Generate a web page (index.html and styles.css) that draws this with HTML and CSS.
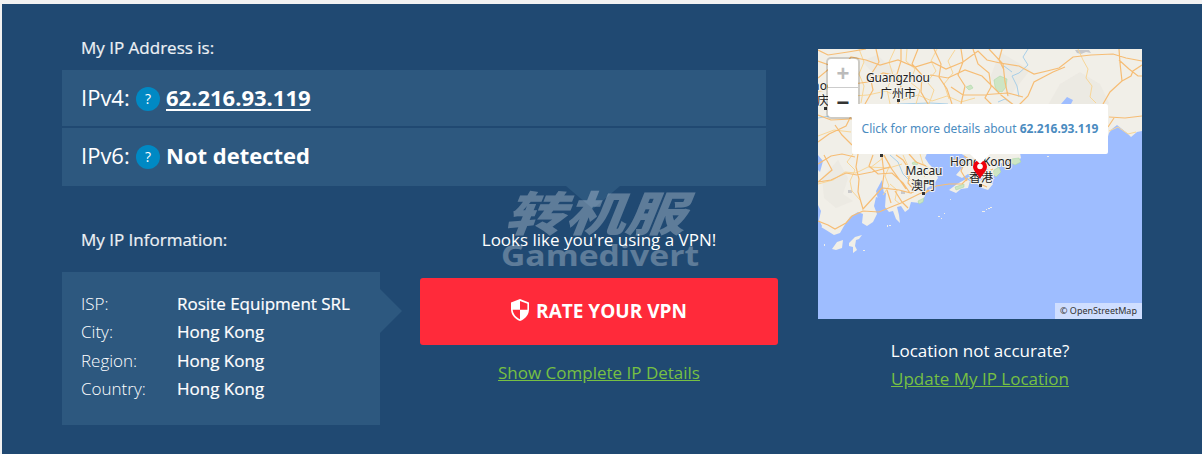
FILE: index.html
```html
<!DOCTYPE html>
<html lang="en">
<head>
  <meta charset="UTF-8" />
  <title>What Is My IP Address</title>
  <link rel="stylesheet" href="styles.css">
</head>
<body>

<div class="hero">
  <div class="left">
    <h2 class="title">My IP Address is:</h2>
    <div class="ip-list">
      <p class="ip-row"><span class="ip-label">IPv4:</span><span class="help">?</span><a class="ip-value" href="#">62.216.93.119</a></p>
      <p class="ip-row"><span class="ip-label">IPv6:</span><span class="help">?</span><span class="ip-value">Not detected</span></p>
    </div>

    <div class="details">
      <div class="info">
        <h2 class="title">My IP Information:</h2>
        <div class="info-box">
          <p><span>ISP:</span><b>Rosite Equipment SRL</b></p>
          <p><span>City:</span><b>Hong Kong</b></p>
          <p><span>Region:</span><b>Hong Kong</b></p>
          <p><span>Country:</span><b>Hong Kong</b></p>
        </div>
      </div>

      <div class="vpn">
        <div class="watermark">
          <svg width="204" height="84" viewBox="0 0 204 84">
            <text class="wm-cn" transform="translate(3 42) skewX(-22)" textLength="180" lengthAdjust="spacingAndGlyphs">转机服</text>
            <text class="wm-en" x="0" y="77" textLength="198" lengthAdjust="spacingAndGlyphs">Gamedivert</text>
          </svg>
        </div>
        <p class="vpn-text">Looks like you're using a VPN!</p>
        <a class="rate" href="#">
          <svg width="18" height="22" viewBox="0 0 18 22">
            <path d="M9 0L18 3.5V10C18 15.500 14.500 20 9 22C3.500 20 0 15.500 0 10V3.500Z" fill="#fff"/>
            <path d="M9 2L16.400 4.700V10.800H9ZM9 10.800V20.200C5 18.500 2 15 1.700 10.800Z" fill="#ff2a3a"/>
          </svg>
          <span>RATE YOUR VPN</span>
        </a>
        <a class="green-link" href="#">Show Complete IP Details</a>
      </div>
    </div>
  </div>

  <div class="right">
    <div class="map">
      <svg class="tiles" width="324" height="270" viewBox="818 49 324 270">
        <rect x="818" y="49" width="324" height="270" fill="#9ebdff"/>

        <!-- mainland -->
        <path fill="#f1efe8" d="M818 49H1142V131L1137 132L1131 137L1127 133L1122 129L1117 125L1112 129L1109 133L1107 140L1100 150L1020 153L1021 158L1016 162L1008 160L1003 164L999 162L997 166L999 171L992 174L987 169L981 173L975 174L968 174L962 178L956 175L962 168L968 162L965 156L955 150L928 151L925 158L929 164L935 170L938 178L934 184L927 188L925 196L920 203L911 202L909 209L905 212L901 206L897 207L899 215L900 223L896 219L893 211L889 212L885 207L886 193L883 192L879 198L876 197L874 206L877 214L873 222L867 226L862 223L863 214L858 212L850 217L844 226L840 233L834 235L826 230L821 227L818 221Z"/>
        <path fill="#e9e6df" d="M822 178L838 160L848 178L843 194L853 201L836 208L824 198ZM1044 112L1060 84L1080 72L1100 84L1109 103L1090 132ZM1000 52L1030 70L1009 97L990 78ZM877 55L895 71L881 82L862 61Z" opacity=".6"/>
        <path fill="#9ebdff" d="M818 205L821 211L819 220L822 226L820 231L818 232ZM818 155L823 161L820 172L818 170ZM1061 104L1067 97L1073 100L1071 104ZM876 191L882 180L884 194L878 199Z"/>

        <!-- islands -->
        <path fill="#f1efe8" d="M949 190L957 184L966 179L970 181L968 188L961 189L956 193ZM975 182L986 179L993 184L988 190L982 188ZM832 249L837 242L843 240L842 248L836 250ZM849 243L855 237L862 235L859 239L856 240L855 246L857 250L853 253L853 247L849 246ZM824 244h1v2h-1zM863 250h2v1h-2zM887 225h1v2h-1zM889 225h2v1h-2zM938 216h2v1h-2zM941 218h1v1h-1zM944 213h1v1h-1zM950 199h1v1h-1zM982 211h3v1h-3zM986 209h1v1h-1zM988 208h2v-1h2v1h-2v1h-2zM1047 156h2v1h-2z"/>
        <path class="park" d="M994 80L1000 76L1007 79L1006 87L1002 92L997 91L995 87ZM966 87l5-2 2 3-4 2zM1011 159l8-1 2 4-6 3-4-2zM994 170l5-3 2 5-5 5-3-3zM955 187l9-3v3l-8 3zM918 201l6-3-1 4-4 2zM912 163l4-2 2 3-4 2z"/>
        <path fill="#c9c9cb" d="M1075 50h14l2 3-5-1-5 2-4-1zM848 190h4v3h-4zM901 191h4v3h-4z"/>

        <!-- rivers -->
        <path class="river" d="M818 118L829 116L842 110L857 107L880 110L900 104L930 103L948 104M1028 49L1023 57L1028 65L1019 73L1012 76L1017 86L1019 97M890 155L898 162L903 174L910 181M998 102L1005 99L1011 103M924 98L933 111M1004 66L1012 72"/>

        <!-- minor roads -->
        <path class="minor" d="M818 92L835 87L852 96L868 95L886 91L903 100L918 95L932 101L947 96L961 102L975 98M859 49L864 62L859 74L864 86L861 103M895 49L889 62L893 75L887 89L890 104M907 49L906 61L915 69L910 82L920 90L916 104M937 49L931 61L936 71L927 82L934 90L929 104M955 50L948 61L953 73L944 84L949 99M818 136L834 130L851 132M853 154L847 162L855 170L850 181L852 191L861 201M883 155L890 165L885 176L889 186L883 195M818 184L833 180L845 172L856 173L868 167L889 168L902 164M903 155L908 166L905 174L915 184L913 193M920 154L923 164L930 169L924 177M1078 49L1083 60L1088 69L1086 78L1092 86L1090 97L1096 103M1109 131L1118 127L1128 134L1136 132M870 168L883 158M954 163L967 166L974 159L989 163L1000 160L1009 162M900 204L895 200L897 190L890 184"/>

        <!-- highways -->
        <path class="road" d="M818 78L830 68L842 68L851 57L866 60L880 65L898 60L915 67L932 62L946 69L963 62L978 51L987 60L1000 63L1019 66L1034 74L1047 71L1059 68L1073 57L1091 55L1113 54L1126 58L1142 61M818 61L829 65L838 77L853 84L868 82L883 73L899 76L916 77L931 75L948 78L965 70L982 76L1001 95L1015 106M876 49L879 62L870 76L873 90L865 104M901 49L901 61L897 74L901 87L898 104M918 49L912 64L922 75L921 92L928 104M934 49L941 64L939 77L947 89L952 104M961 49L963 62L958 75L965 86L961 104M973 49L978 64L989 73L991 87L985 98L993 106M989 49L1003 64L1005 82L1008 96M1002 49L999 60L1004 70M1019 105L1028 96L1034 82L1053 72L1065 67M1119 49L1120 63L1122 81L1110 92L1103 104M1119 60L1129 69L1138 76L1142 76M1122 81L1131 76L1133 71L1142 65M1109 117L1125 118L1142 116M1108 127L1114 118M818 182L831 180L846 173L857 175L872 172L890 167M818 221L828 225L835 229L846 223L852 216L863 211L879 212L891 207L901 203L919 194L929 190M818 142L829 134L846 126L851 116M818 164L831 156L842 154L855 157M824 155L832 170L818 182M858 154L856 167L859 179L858 192L863 209L873 198L882 188L899 190L911 193L921 187M882 157L884 174L882 188M873 155L869 166L878 174L892 173L903 183L910 193M884 155L891 168L899 179L906 189M896 155L903 160L910 171L908 183L914 190M909 154L916 162L926 166M887 190L891 203M895 191L902 202L908 208M924 194L936 186L949 184L962 184L968 178M951 158L964 164L961 171L967 181M964 156L978 165L985 173L993 169M980 184L987 187M818 115L831 120L852 119M852 145L842 135L835 125M818 50L828 55L848 52L866 49M951 87L963 95L980 95L1008 93L1023 97"/>

        <!-- places -->
        <g class="place">
          <text x="798" y="90" textLength="55">Zhaoqing</text>
          <text x="805" y="105">肇庆</text>
          <text x="898" y="82" text-anchor="middle" textLength="64">Guangzhou</text>
          <text x="898" y="98" text-anchor="middle">广州市</text>
          <text x="924" y="175" text-anchor="middle" textLength="37">Macau</text>
          <text x="923" y="190" text-anchor="middle">澳門</text>
          <text x="981" y="166" text-anchor="middle" textLength="62">Hong Kong</text>
          <text x="981" y="182" text-anchor="middle">香港</text>
        </g>
        <path fill="#333" d="M824 107h3v3h-3zM897 99h3v3h-3zM880 154h3v3h-3zM922 192h3v3h-3zM979 184h3v3h-3z"/>

        <!-- marker -->
        <path fill="#f0000b" d="M980 179C978 174 973 171.500 973 166.500A7 6.500 0 0 1 987 166.500C987 171.500 982 174 980 179Z"/>
        <circle cx="980" cy="166.500" r="2.800" fill="#fff"/>
      </svg>
      <div class="zoom-control"><span class="disabled">+</span><span>−</span></div>
      <div class="popup">Click for more details about <b>62.216.93.119</b></div>
      <div class="attribution">© OpenStreetMap</div>
    </div>
    <p class="location-text">Location not accurate?</p>
    <a class="green-link" href="#">Update My IP Location</a>
  </div>
</div>

</body>
</html>
```

FILE: styles.css
```css
body {
  margin: 0;
  padding: 4px 0 0 2px;
  background: #f2f2f2;
  font-family: "Open Sans", "Noto Sans CJK SC", sans-serif;
  font-size: 17px;
  color: #fff;
}

p, h2 {
  margin: 0;
}

.hero {
  display: flex;
  height: 450px;
  padding-left: 60px;
  box-sizing: border-box;
  background: #204972;
  overflow: hidden;
}

.left {
  width: 704px;
  flex-shrink: 0;
  padding-top: 32px;
}

.title {
  padding-left: 19px;
  font-size: 17px;
  font-weight: 400;
  line-height: 24px;
  color: #edf1f5;
  -webkit-text-stroke: 0.200px #edf1f5;
}

/* address rows */
.ip-list {
  position: relative;
  display: flex;
  flex-direction: column;
  gap: 2px;
  margin-top: 10px;
}

.ip-list::after {
  content: "";
  position: absolute;
  left: 504px;
  top: 116px;
  border: 27px solid transparent;
  border-top: 23px solid #2d587f;
  border-bottom: 0;
}

.ip-row {
  display: flex;
  align-items: flex-start;
  height: 56px;
  padding-left: 19px;
  background: #2d587f;
  font-size: 22px;
  line-height: 54px;
}

.ip-row + .ip-row {
  height: 58px;
}

.ip-label {
  width: 55px;
}

.help {
  width: 24px;
  margin: 17px 6px 0 0;
  border-radius: 50%;
  background: #0089c4;
  font-size: 14px;
  line-height: 24px;
  text-align: center;
}

.ip-value {
  color: #fff;
  font-weight: 700;
  text-underline-offset: 3px;
}

/* info + vpn */
.details {
  display: flex;
  gap: 40px;
  margin-top: 42px;
}

.info {
  width: 318px;
  flex-shrink: 0;
}

.info-box {
  position: relative;
  height: 153px;
  margin-top: 20px;
  padding: 18px 0 0 19px;
  box-sizing: border-box;
  background: #2d587f;
}

.info-box::after {
  content: "";
  position: absolute;
  left: 318px;
  top: 17px;
  border: 22px solid transparent;
  border-left-color: #2d587f;
  border-right: 0;
}

.info-box p {
  display: flex;
  line-height: 28.300px;
}

.info-box span {
  width: 96px;
  font-weight: 300;
}

.info-box b {
  font-weight: 400;
  -webkit-text-stroke: 0.200px #fff;
}

.vpn {
  position: relative;
  width: 358px;
  flex-shrink: 0;
  text-align: center;
}

.watermark {
  position: absolute;
  left: 81px;
  top: -39px;
  opacity: 0.280;
}

.watermark text {
  fill: #fff;
}

.wm-cn {
  font: 900 47px "Noto Sans CJK SC", sans-serif;
}

.wm-en {
  font: 700 28px "Open Sans", sans-serif;
}

.vpn-text {
  position: relative;
  line-height: 24px;
}

.rate {
  display: flex;
  align-items: center;
  justify-content: center;
  gap: 7px;
  height: 67px;
  margin: 26px 0 16px;
  border-radius: 3px;
  background: #ff2a3a;
  color: #fff;
  font-size: 19px;
  font-weight: 700;
  text-decoration: none;
}

.rate svg {
  margin-bottom: 3px;
}

.rate span {
  padding-bottom: 2px;
}

.green-link {
  color: #77c043;
  line-height: 24px;
}

/* map */
.right {
  width: 324px;
  margin-left: 52px;
  padding-top: 45px;
  text-align: center;
}

.map {
  position: relative;
  width: 324px;
  height: 270px;
  margin-bottom: 20px;
  overflow: hidden;
}

.tiles {
  display: block;
}

.road, .minor, .river {
  fill: none;
  stroke: #f6bd75;
  stroke-width: 1.200px;
}

.minor {
  stroke: #f8d697;
  stroke-width: 1px;
}

.river {
  stroke: #a8cfe8;
  stroke-width: 1px;
}

.park {
  fill: #cde5c4;
  stroke: #a4d6a0;
  stroke-width: 0.500px;
}

.place {
  font: 12px "Noto Sans", "Noto Sans CJK SC", sans-serif;
  fill: #222;
  stroke: #f4f3ee;
  stroke-width: 2px;
  paint-order: stroke;
}

.zoom-control {
  position: absolute;
  left: 8px;
  top: 8px;
  width: 30px;
  border: 2px solid rgba(0, 0, 0, 0.150);
  border-radius: 5px;
  background: #fff;
  background-clip: padding-box;
  color: #333;
  font: bold 22px "Liberation Sans", sans-serif;
}

.zoom-control span {
  display: block;
  height: 29px;
  line-height: 29px;
}

.zoom-control .disabled {
  height: 28px;
  border-bottom: 1px solid #ccc;
  color: #bbb;
}

.popup {
  position: absolute;
  left: 34px;
  top: 55px;
  width: 256px;
  border-radius: 2px;
  background: #fff;
  color: #4a8bbf;
  font-family: "Noto Sans", sans-serif;
  font-size: 12px;
  line-height: 50px;
  white-space: nowrap;
}

.popup::after {
  content: "";
  position: absolute;
  left: 118px;
  top: 50px;
  border: 10px solid transparent;
  border-top-color: #fff;
  border-bottom: 0;
}

.attribution {
  position: absolute;
  right: 0;
  bottom: 0;
  width: 87px;
  background: rgba(255, 255, 255, 0.500);
  color: #333;
  font: 9px/16px "Noto Sans", sans-serif;
}

.location-text {
  line-height: 24px;
  margin-bottom: 4px;
}
```
